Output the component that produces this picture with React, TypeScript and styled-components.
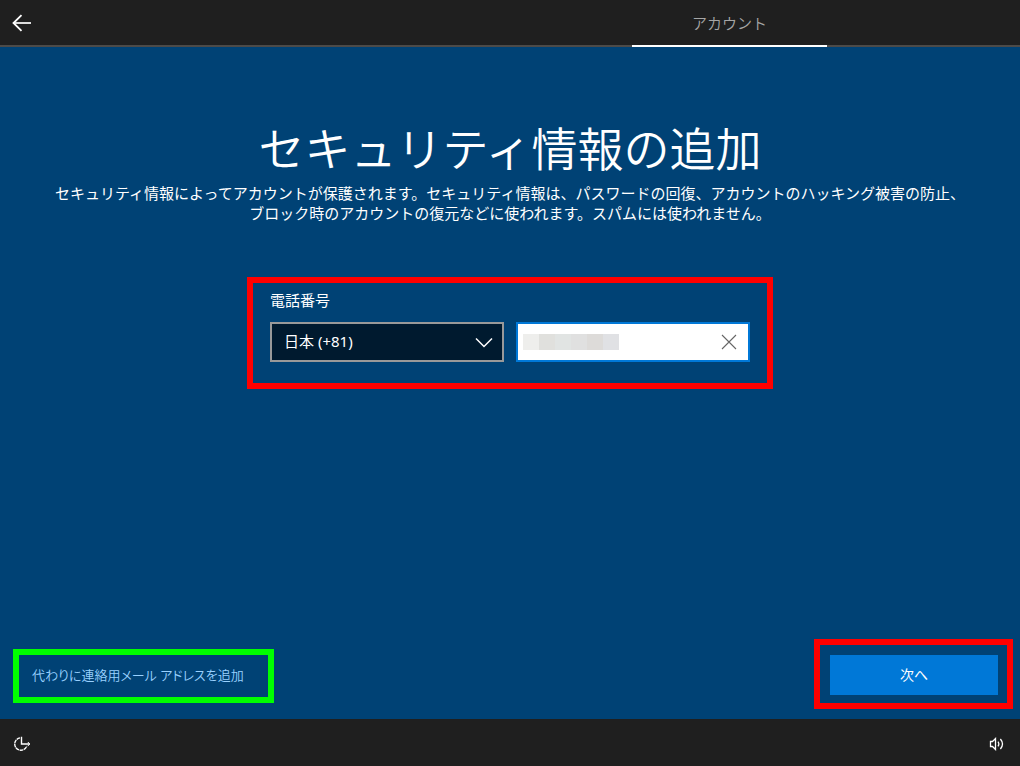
import React, { useState } from "react"
import styled, { createGlobalStyle } from "styled-components"

const GlobalStyle = createGlobalStyle`
  * {
    box-sizing: border-box;
  }
  body {
    margin: 0;
    background: #004275;
    color: #fff;
    font-family: "Noto Sans", "Noto Sans CJK JP", sans-serif;
    font-size: 15px;
    line-height: 20px;
  }
  button, input, select {
    font: inherit;
    border-radius: 0;
  }
`

const Page = styled.div`
  display: flex;
  flex-direction: column;
  min-height: 100vh;
`

const TopBar = styled.header`
  display: flex;
  justify-content: space-between;
  height: 47px;
  padding-right: 193px;
  background: #1f1f1f;
  box-shadow: inset 0 -2px #4c4a48;
`

const IconButton = styled.button`
  display: flex;
  align-items: center;
  justify-content: center;
  width: 44px;
  height: 100%;
  padding: 0;
  border: none;
  background: none;
  color: #fff;
`

const Tab = styled.a`
  width: 195px;
  padding-top: 13px;
  border-bottom: 2px solid #fff;
  color: #a6a6a6;
  font-weight: 350;
  text-align: center;
  text-decoration: none;
`

const Main = styled.main`
  display: flex;
  flex: 1;
  flex-direction: column;
  background: #004275;
`

const Title = styled.h1`
  margin: 67px 0 5px;
  font-family: "Noto Sans CJK JP", sans-serif;
  font-size: 46px;
  font-weight: 350;
  line-height: 64px;
  text-align: center;
`

const Description = styled.p`
  max-width: 920px;
  margin: 0 auto;
  text-align: center;
`

const Frame = styled.div<{ $color: string }>`
  border: 6px solid ${({ $color }) => $color};
`

const PhoneFrame = styled(Frame)`
  width: 100%;
  max-width: 526px;
  margin: 54px auto 0;
  padding: 7px 17px 21px;
`

const Label = styled.label`
  display: block;
  margin-bottom: 12px;
`

const Fields = styled.div`
  display: grid;
  grid-template-columns: 1fr 1fr;
  gap: 12px;
`

const Field = styled.div`
  position: relative;
  height: 40px;
`

const CountrySelect = styled.select`
  width: 100%;
  height: 100%;
  padding: 0 40px 2px 12px;
  border: 2px solid #999;
  background: #001a2f;
  color: #fff;
  appearance: none;
  outline: none;
`

const PhoneInput = styled.input<{ $masked: boolean }>`
  width: 100%;
  height: 100%;
  padding: 0 40px 0 8px;
  border: 2px solid #0078d7;
  background: #fff;
  color: #000;
  outline: none;
  ${({ $masked }) => $masked && `
    background: #fff linear-gradient(
      90deg,
      #eeeeec 0 16px,
      #e0e0dd 16px 32px,
      #e1e4e3 32px 48px,
      #e0e0e0 48px 64px,
      #dddbd9 64px 80px,
      #e0e1e4 80px 96px
    ) 5px 10px / 96px 16px no-repeat;
  `}
`

const Chevron = styled.svg`
  position: absolute;
  top: 15px;
  right: 11px;
  pointer-events: none;
`

const ClearButton = styled(IconButton)`
  position: absolute;
  top: 0;
  right: 0;
  width: 42px;
  color: #666;
`

const Actions = styled.div`
  display: flex;
  align-items: flex-end;
  justify-content: space-between;
  margin-top: auto;
  padding: 0 7px 10px 13px;
`

const LinkFrame = styled(Frame)`
  margin-bottom: 6px;
  padding: 10px 24px 12px 13px;
`

const AltLink = styled.a`
  display: block;
  color: #99d1ff;
  font-feature-settings: "palt";
  font-size: 13px;
  font-weight: 350;
  text-decoration: none;
`

const NextFrame = styled(Frame)`
  padding: 10px 9px 8px 10px;
`

const NextButton = styled.button`
  display: block;
  width: 168px;
  height: 40px;
  padding: 0;
  border: none;
  background: #0078d7;
  color: #fff;
  font-size: 14px;
`

const BottomBar = styled.footer`
  display: flex;
  justify-content: space-between;
  height: 47px;
  padding: 1px 1px 0 0;
  background: #1f1f1f;
`

const BackIcon = () => (
  <svg width="20" height="19" viewBox="0 0 20 19" fill="none" stroke="currentColor">
    <path d="M2 9H19" stroke="#dcdcdc" strokeWidth="2" />
    <path d="M9.5 1.2L1.5 9L9.5 16.8" strokeWidth="1.8" />
  </svg>
)

const EaseIcon = () => (
  <svg width="18" height="16" viewBox="0 0 18 16" fill="none" stroke="currentColor">
    <path d="M7 2.9A6.2 6.2 0 1 0 13.8 11" strokeWidth="1.4" strokeDasharray="3.6 0.6" />
    <path d="M8.5 1.8V9H16.5" strokeWidth="1.4" />
    <path d="M14.8 7L16.8 9L14.8 11" strokeWidth="1" />
  </svg>
)

const VolumeIcon = () => (
  <svg width="16" height="16" viewBox="0 -2 16 16" fill="none" stroke="currentColor">
    <path d="M1.5 4.5H3.5L6.5 1.5V12.5L3.5 9.5H1.5Z" strokeWidth="1.3" />
    <path d="M9 4.6Q10.8 7 9 9.4" strokeWidth="1.2" />
    <path d="M11.4 2Q15.6 7 11.4 12" strokeWidth="1.3" />
  </svg>
)

export default function App () {
  const [phone, setPhone] = useState("")
  const [masked, setMasked] = useState(true)

  return (
    <>
      <GlobalStyle />
      <Page>
        <TopBar>
          <IconButton type="button" aria-label="戻る">
            <BackIcon />
          </IconButton>
          <Tab href="#account">アカウント</Tab>
        </TopBar>
        <Main id="account">
          <Title>セキュリティ情報の追加</Title>
          <Description>
            セキュリティ情報によってアカウントが保護されます。セキュリティ情報は、パスワードの回復、アカウントのハッキング被害の防止、ブロック時のアカウントの復元などに使われます。スパムには使われません。
          </Description>
          <PhoneFrame $color="#f00">
            <Label htmlFor="phone">電話番号</Label>
            <Fields>
              <Field>
                <CountrySelect aria-label="国コード">
                  <option>日本 (+81)</option>
                </CountrySelect>
                <Chevron width="18" height="11" viewBox="0 0 18 11" fill="none" stroke="#fff">
                  <path d="M1 1.5L9 9.5L17 1.5" strokeWidth="1.5" />
                </Chevron>
              </Field>
              <Field>
                <PhoneInput
                  id="phone"
                  type="tel"
                  value={phone}
                  $masked={masked}
                  onChange={(e) => {
                    setMasked(false)
                    setPhone(e.target.value)
                  }}
                />
                <ClearButton
                  type="button"
                  aria-label="クリア"
                  onClick={() => {
                    setMasked(false)
                    setPhone("")
                  }}
                >
                  <svg width="16" height="16" viewBox="0 0 16 16" fill="none" stroke="currentColor">
                    <path d="M1 1L15 15M15 1L1 15" strokeWidth="1.1" />
                  </svg>
                </ClearButton>
              </Field>
            </Fields>
          </PhoneFrame>
          <Actions>
            <LinkFrame $color="#0f0">
              <AltLink href="#email">代わりに連絡用メール アドレスを追加</AltLink>
            </LinkFrame>
            <NextFrame $color="#f00">
              <NextButton type="button">次へ</NextButton>
            </NextFrame>
          </Actions>
        </Main>
        <BottomBar>
          <IconButton type="button" aria-label="簡単操作">
            <EaseIcon />
          </IconButton>
          <IconButton type="button" aria-label="音量">
            <VolumeIcon />
          </IconButton>
        </BottomBar>
      </Page>
    </>
  )
}
